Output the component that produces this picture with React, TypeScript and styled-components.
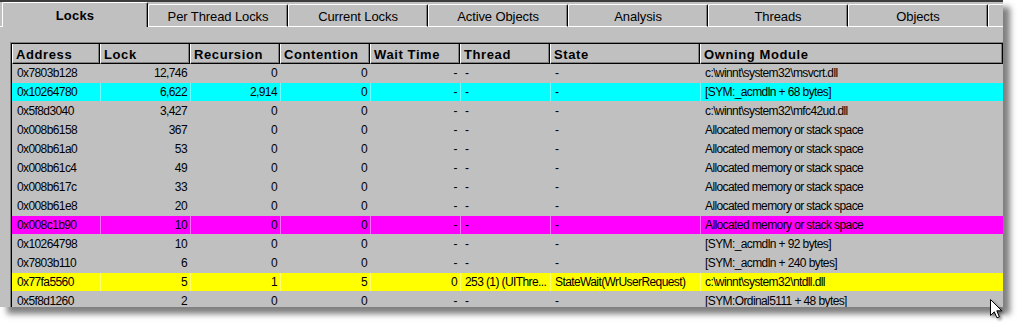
import styled, { createGlobalStyle } from "styled-components";

const GlobalStyle = createGlobalStyle`
  html, body {
    margin: 0;
    padding: 0;
    background: #ffffff;
  }
  body {
    font-family: "Liberation Sans", Arial, sans-serif;
  }
`;

const Page = styled.div`
  position: relative;
  width: 1018px;
  height: 332px;
  overflow: hidden;
`;

const Window = styled.div`
  width: 1003px;
  height: 307px;
  background: #c0c0c0;
  border-top: 2px solid #3c3c3c;
  box-sizing: border-box;
  box-shadow: 7px 7px 6px rgba(0, 0, 0, 0.5);
  display: flex;
  flex-direction: column;
  overflow: hidden;
`;

const TabStrip = styled.div`
  display: flex;
  align-items: flex-end;
  height: 25px;
  flex-shrink: 0;
`;

const TabStep = styled.div`
  width: 2px;
  height: 1px;
  flex-shrink: 0;
  background: #ffffff;
`;

const Tab = styled.div<{ active?: boolean }>`
  flex-shrink: 0;
  box-sizing: border-box;
  width: ${({ active }) => (active ? "146px" : "140px")};
  height: ${({ active }) => (active ? "25px" : "23px")};
  border-top: 1px solid #ffffff;
  border-left: 1px solid #ffffff;
  border-right: 1px solid #000000;
  border-bottom: ${({ active }) => (active ? "none" : "1px solid #ffffff")};
  border-top-left-radius: 2px;
  border-top-right-radius: 2px;
  box-shadow: inset -1px 0 0 #808080;
  display: flex;
  align-items: center;
  justify-content: center;
  padding-top: ${({ active }) => (active ? "0" : "2px")};
  font-size: 13px;
  font-weight: ${({ active }) => (active ? 700 : 400)};
  letter-spacing: ${({ active }) => (active ? "0.2px" : "-0.1px")};
  color: #000;
  white-space: nowrap;
`;

const Panel = styled.div`
  flex: 1;
  min-height: 0;
  display: flex;
  padding: 15px 0 0 10px;
`;

const ListFrame = styled.div`
  flex: 1;
  min-height: 0;
  border-top: 1px solid #808080;
  border-left: 1px solid #808080;
  display: flex;
`;

const ListBody = styled.div`
  flex: 1;
  min-height: 0;
  border-top: 1px solid #000;
  border-left: 1px solid #000;
  display: flex;
  flex-direction: column;
`;

const Row = styled.div<{ tint?: string }>`
  display: grid;
  grid-template-columns: 88px 90px 90px 90px 90px 90px 150px 1fr;
  flex-shrink: 0;
  height: 19px;
  box-sizing: border-box;
  border-bottom: 1px solid #c0c0c0;
  background: ${({ tint }) => tint || "#c0c0c0"};
  font-size: 12px;
  letter-spacing: -0.6px;
  color: #000;
`;

const HeaderRow = styled.div`
  display: grid;
  grid-template-columns: 88px 90px 90px 90px 90px 90px 150px 1fr;
  flex-shrink: 0;
  height: 20px;
`;

const HeaderCell = styled.div`
  box-sizing: border-box;
  border-left: 1px solid #ffffff;
  border-right: 1px solid #000;
  border-bottom: 1px solid #000;
  box-shadow: inset -1px -1px 0 #808080;
  padding: 1px 0 0 3px;
  display: flex;
  align-items: center;
  font-size: 13px;
  font-weight: 700;
  letter-spacing: 0.6px;
  white-space: nowrap;
  overflow: hidden;
`;

const Cell = styled.div<{ right?: boolean; lined?: boolean }>`
  box-sizing: border-box;
  display: flex;
  align-items: center;
  justify-content: ${({ right }) => (right ? "flex-end" : "flex-start")};
  padding: 0 ${({ right }) => (right ? "3px" : "0")} 0
    ${({ right }) => (right ? "0" : "4px")};
  border-left: 1px solid
    ${({ lined }) => (lined ? "rgba(255, 255, 255, 0.45)" : "transparent")};
  white-space: nowrap;
  overflow: hidden;
`;

const Pointer = styled.svg`
  position: absolute;
  left: 990px;
  top: 299px;
  filter: drop-shadow(2px 2px 1.5px rgba(0, 0, 0, 0.45));
`;

type Lock = {
  address: string;
  lock: string;
  recursion: string;
  contention: string;
  wait: string;
  thread: string;
  state: string;
  module: string;
  tint?: string;
};

const ALLOC = "Allocated memory or stack space";

const locks: Lock[] = [
  { address: "0x7803b128", lock: "12,746", recursion: "0", contention: "0", wait: "-", thread: "-", state: "-", module: "c:\\winnt\\system32\\msvcrt.dll" },
  { address: "0x10264780", lock: "6,622", recursion: "2,914", contention: "0", wait: "-", thread: "-", state: "-", module: "[SYM:_acmdln + 68 bytes]", tint: "#00ffff" },
  { address: "0x5f8d3040", lock: "3,427", recursion: "0", contention: "0", wait: "-", thread: "-", state: "-", module: "c:\\winnt\\system32\\mfc42ud.dll" },
  { address: "0x008b6158", lock: "367", recursion: "0", contention: "0", wait: "-", thread: "-", state: "-", module: ALLOC },
  { address: "0x008b61a0", lock: "53", recursion: "0", contention: "0", wait: "-", thread: "-", state: "-", module: ALLOC },
  { address: "0x008b61c4", lock: "49", recursion: "0", contention: "0", wait: "-", thread: "-", state: "-", module: ALLOC },
  { address: "0x008b617c", lock: "33", recursion: "0", contention: "0", wait: "-", thread: "-", state: "-", module: ALLOC },
  { address: "0x008b61e8", lock: "20", recursion: "0", contention: "0", wait: "-", thread: "-", state: "-", module: ALLOC },
  { address: "0x008c1b90", lock: "10", recursion: "0", contention: "0", wait: "-", thread: "-", state: "-", module: ALLOC, tint: "#ff00ff" },
  { address: "0x10264798", lock: "10", recursion: "0", contention: "0", wait: "-", thread: "-", state: "-", module: "[SYM:_acmdln + 92 bytes]" },
  { address: "0x7803b110", lock: "6", recursion: "0", contention: "0", wait: "-", thread: "-", state: "-", module: "[SYM:_acmdln + 240 bytes]" },
  { address: "0x77fa5560", lock: "5", recursion: "1", contention: "5", wait: "0", thread: "253 (1) (UIThre...", state: "StateWait(WrUserRequest)", module: "c:\\winnt\\system32\\ntdll.dll", tint: "#ffff00" },
  { address: "0x5f8d1260", lock: "2", recursion: "0", contention: "0", wait: "-", thread: "-", state: "-", module: "[SYM:Ordinal5111 + 48 bytes]" },
];

const tabs = ["Per Thread Locks", "Current Locks", "Active Objects", "Analysis", "Threads", "Objects", ""];

const columns = ["Address", "Lock", "Recursion", "Contention", "Wait Time", "Thread", "State", "Owning Module"];

export default function App() {
  return (
    <Page>
      <GlobalStyle />
      <Window>
        <TabStrip>
          <TabStep />
          <Tab active>Locks</Tab>
          {tabs.map((t, i) => (
            <Tab key={i}>{t}</Tab>
          ))}
        </TabStrip>
        <Panel>
          <ListFrame>
            <ListBody>
              <HeaderRow>
                {columns.map((c) => (
                  <HeaderCell key={c}>{c}</HeaderCell>
                ))}
              </HeaderRow>
              {locks.map((l) => {
                const lined = !!l.tint;
                return (
                  <Row key={l.address} tint={l.tint}>
                    <Cell>{l.address}</Cell>
                    <Cell right lined={lined}>{l.lock}</Cell>
                    <Cell right lined={lined}>{l.recursion}</Cell>
                    <Cell right lined={lined}>{l.contention}</Cell>
                    <Cell right lined={lined}>{l.wait}</Cell>
                    <Cell lined={lined}>{l.thread}</Cell>
                    <Cell lined={lined}>{l.state}</Cell>
                    <Cell lined={lined}>{l.module}</Cell>
                  </Row>
                );
              })}
            </ListBody>
          </ListFrame>
        </Panel>
      </Window>
      <Pointer width="14" height="22" viewBox="0 0 14 22">
        <path
          d="M0.5 0.5 L0.5 16.5 L4.3 12.8 L6.9 18.8 L9.4 17.8 L6.8 11.8 L11.8 11.8 Z"
          fill="#ffffff"
          stroke="#000000"
          strokeWidth="1"
          strokeLinejoin="miter"
        />
      </Pointer>
    </Page>
  );
}
